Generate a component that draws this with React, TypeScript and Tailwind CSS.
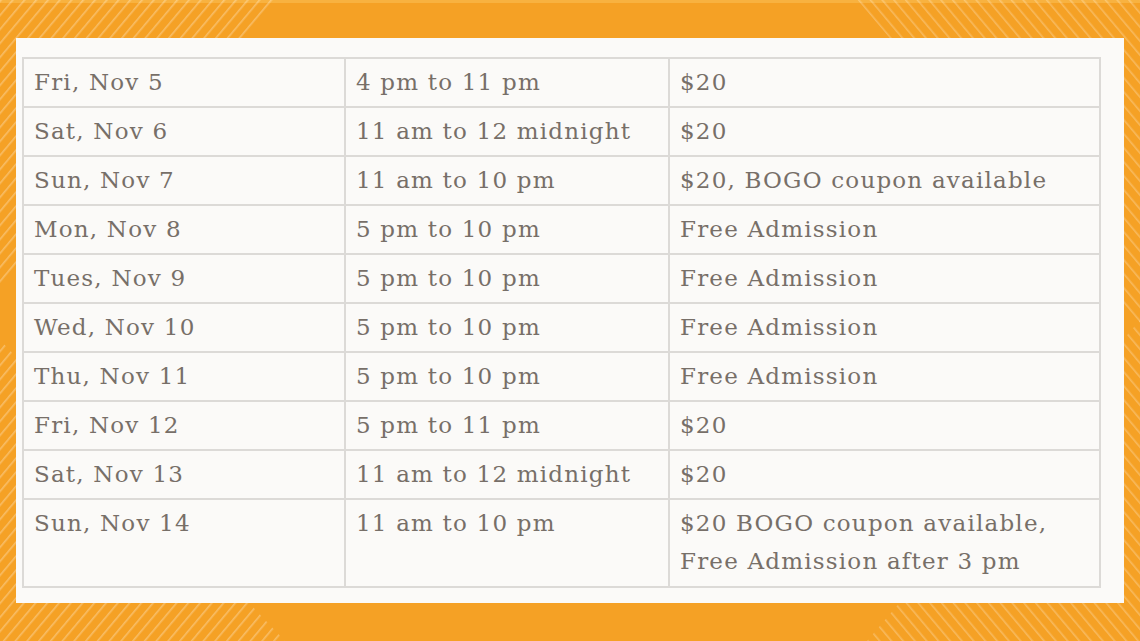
import React from "react";

const rows: [string, string, string[]][] = [
  ["Fri, Nov 5", "4 pm to 11 pm", ["$20"]],
  ["Sat, Nov 6", "11 am to 12 midnight", ["$20"]],
  ["Sun, Nov 7", "11 am to 10 pm", ["$20, BOGO coupon available"]],
  ["Mon, Nov 8", "5 pm to 10 pm", ["Free Admission"]],
  ["Tues, Nov 9", "5 pm to 10 pm", ["Free Admission"]],
  ["Wed, Nov 10", "5 pm to 10 pm", ["Free Admission"]],
  ["Thu, Nov 11", "5 pm to 10 pm", ["Free Admission"]],
  ["Fri, Nov 12", "5 pm to 11 pm", ["$20"]],
  ["Sat, Nov 13", "11 am to 12 midnight", ["$20"]],
  ["Sun, Nov 14", "11 am to 10 pm", ["$20 BOGO coupon available,", "Free Admission after 3 pm"]],
];

function Stripes() {
  return (
    <svg className="absolute inset-0" width="1140" height="641" viewBox="0 0 1140 641">
      <defs>
        <pattern id="fwd" width="9" height="9" patternUnits="userSpaceOnUse" patternTransform="rotate(40)">
          <rect x="0" y="0" width="1.6" height="9" fill="#ffffff" fillOpacity="0.3" />
        </pattern>
        <pattern id="back" width="9" height="9" patternUnits="userSpaceOnUse" patternTransform="rotate(-40)">
          <rect x="0" y="0" width="1.6" height="9" fill="#ffffff" fillOpacity="0.26" />
        </pattern>
      </defs>
      <rect x="0" y="0" width="1140" height="3" fill="#f8b240" />
      <polygon points="0,0 280,0 0,285" fill="url(#fwd)" />
      <polygon points="0,340 285,641 0,641" fill="url(#fwd)" />
      <polygon points="857,0 1140,0 1140,330" fill="url(#back)" />
      <polygon points="867,641 1140,641 1140,320" fill="url(#back)" />
    </svg>
  );
}

export default function App() {
  return (
    <div className="relative w-[1140px] h-[641px] overflow-hidden bg-[#f5a125]">
      <Stripes />
      <div className="relative pt-[38px] pl-[16px]">
        <div className="w-[1108px] h-[565px] bg-[#fbfaf8] pt-[19px] pl-[6px]">
          <table
            className="border-collapse text-[#776f68] text-[23px] tracking-[1.2px]"
            style={{ fontFamily: '"DejaVu Serif", "Liberation Serif", serif' }}
          >
            <colgroup>
              <col className="w-[322px]" />
              <col className="w-[324px]" />
              <col className="w-[431px]" />
            </colgroup>
            <tbody>
              {rows.map((r, i) => (
                <tr key={i} className={i === rows.length - 1 ? "h-[88px]" : "h-[49px]"}>
                  <td className="border-2 border-[#dcdad7] pl-[10px] pr-[4px] align-top pt-[9px] leading-[28px]">{r[0]}</td>
                  <td className="border-2 border-[#dcdad7] pl-[10px] pr-[4px] align-top pt-[9px] leading-[28px]">{r[1]}</td>
                  <td className="border-2 border-[#dcdad7] pl-[10px] pr-[4px] align-top pt-[9px] leading-[28px]">
                    {r[2].map((t, j) => (
                      <div key={j} className={j > 0 ? "mt-[10px]" : ""}>{t}</div>
                    ))}
                  </td>
                </tr>
              ))}
            </tbody>
          </table>
        </div>
      </div>
    </div>
  );
}
